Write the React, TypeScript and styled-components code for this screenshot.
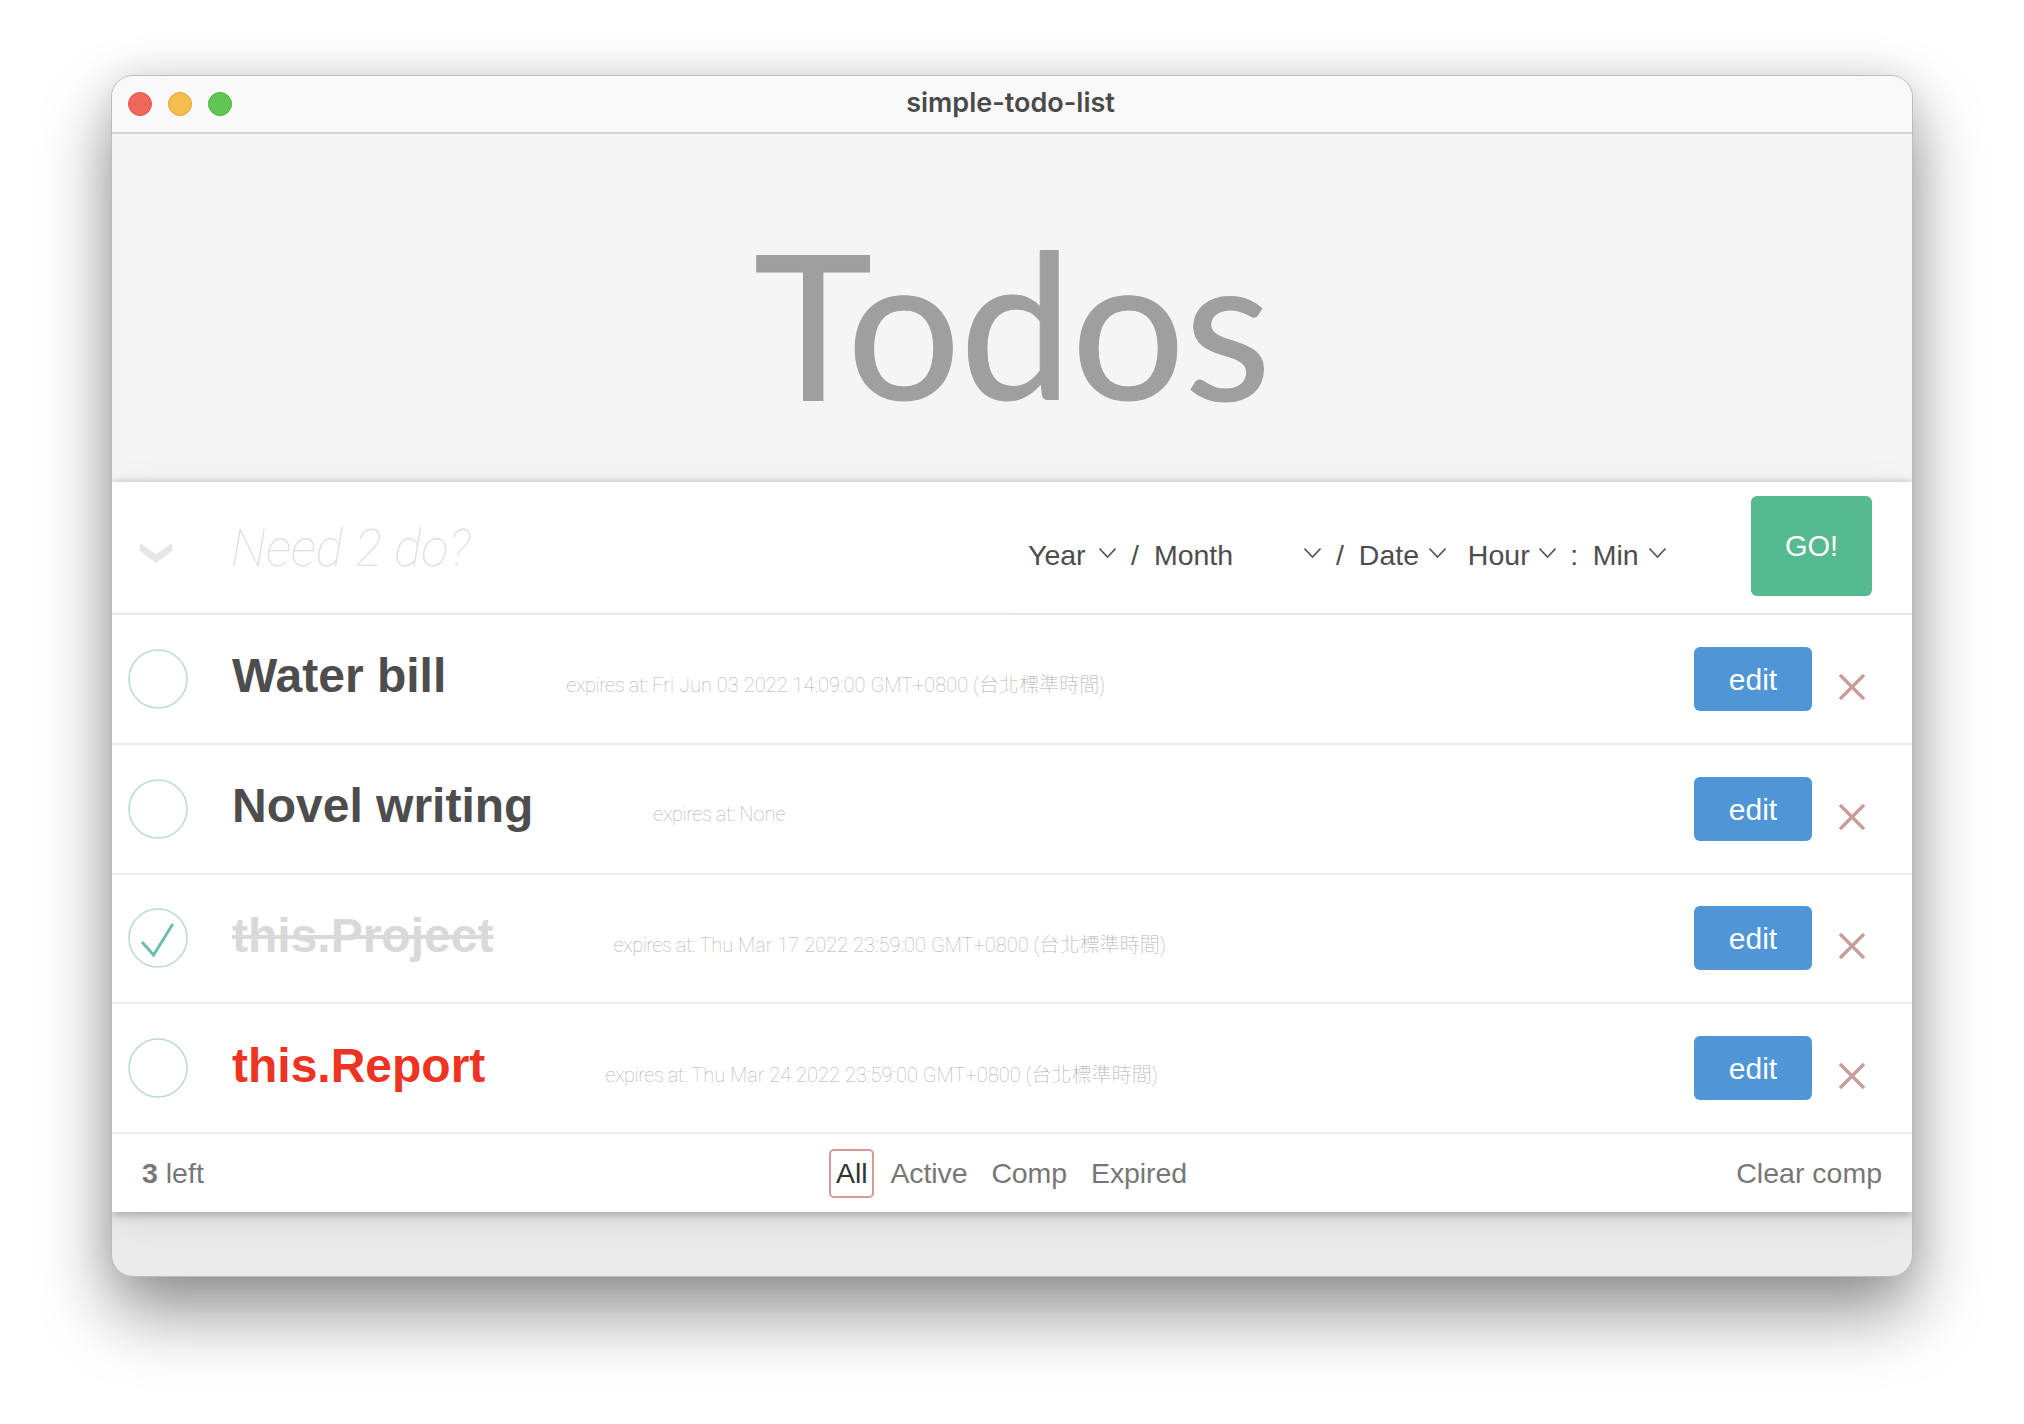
import React from 'react';
import styled, { createGlobalStyle } from 'styled-components';

interface Todo {
	id: string;
	title: string;
	expires: string;
	done?: boolean;
	expired?: boolean;
}

const todos: Todo[] = [
	{ id: 'a', title: 'Water bill', expires: 'Fri Jun 03 2022 14:09:00 GMT+0800 (台北標準時間)' },
	{ id: 'b', title: 'Novel writing', expires: 'None' },
	{ id: 'c', title: 'this.Project', expires: 'Thu Mar 17 2022 23:59:00 GMT+0800 (台北標準時間)', done: true },
	{ id: 'd', title: 'this.Report', expires: 'Thu Mar 24 2022 23:59:00 GMT+0800 (台北標準時間)', expired: true },
];

const GlobalStyle = createGlobalStyle`
	* {
		box-sizing: border-box;
	}
	html, body {
		margin: 0;
		background: #fff;
	}
	body {
		font-family: 'Liberation Sans', Arial, 'Noto Sans CJK TC', sans-serif;
		color: #4d4d4d;
	}
`;

const Page = styled.div`
	width: 2024px;
	height: 1424px;
	padding: 75px 111px 0 111px;
	overflow: hidden;
`;

const Window = styled.div`
	height: 1202px;
	border-radius: 22px;
	background: #ebebeb;
	border: 1px solid #bcbcbc;
	box-shadow: 0 36px 70px rgba(0, 0, 0, 0.42), 0 0 40px rgba(0, 0, 0, 0.1);
	overflow: hidden;
`;

const TitleBar = styled.div`
	position: relative;
	height: 58px;
	display: flex;
	align-items: center;
	justify-content: center;
	background: #f9f9f9;
	border-bottom: 2px solid #d4d4d4;
`;

const Lights = styled.div`
	position: absolute;
	left: 16px;
	top: 16px;
	display: flex;
	gap: 16px;
`;

const Light = styled.span<{ $fill: string; $edge: string }>`
	width: 24px;
	height: 24px;
	border-radius: 50%;
	background: ${(p) => p.$fill};
	border: 1px solid ${(p) => p.$edge};
`;

const WindowTitle = styled.div`
	font-family: Inter, sans-serif;
	font-size: 27px;
	font-weight: 600;
	color: #4a4a4a;
	margin: -3px 0 0 -3px;
`;

const Header = styled.header`
	height: 348px;
	background: #f5f5f5;
	display: flex;
	justify-content: center;
`;

const Heading = styled.h1`
	margin: 69px 0 0;
	font-family: Lato, sans-serif;
	font-size: 201px;
	line-height: 240px;
	font-weight: 400;
	color: #9f9f9f;
	letter-spacing: -1px;
	-webkit-text-stroke: 1px #9f9f9f;
`;

const Panel = styled.div`
	background: #fff;
	box-shadow: 0 2px 10px rgba(0, 0, 0, 0.3), 0 10px 40px rgba(0, 0, 0, 0.07);
`;

const InputRow = styled.div`
	height: 133px;
	display: flex;
	border-bottom: 2px solid #e6e6e6;
`;

const InputArea = styled.div`
	width: 900px;
	display: flex;
	align-items: flex-start;
	border-bottom: 2px solid #f0f0f0;
	margin-bottom: -1px;
`;

const ToggleAll = styled.svg`
	width: 34px;
	height: 24px;
	margin: 58px 0 0 27px;
	flex: none;
`;

const Placeholder = styled.div`
	margin: 37px 0 0 58px;
	font-family: Roboto, sans-serif;
	font-size: 51px;
	line-height: 60px;
	font-weight: 100;
	font-style: italic;
	color: #dfdfdf;
`;

const DateArea = styled.div`
	flex: 1;
	display: flex;
	align-items: flex-start;
	padding: 14px 40px 0 16px;
`;

const DateFields = styled.div`
	display: flex;
	align-items: center;
	height: 68px;
	margin-top: 25px;
	font-size: 28.5px;
	color: #4d4d4d;
`;

const DateSelect = styled.div<{ $width: number }>`
	width: ${(p) => p.$width}px;
	display: flex;
	align-items: center;
	justify-content: space-between;
`;

const Separator = styled.span<{ $gap: number }>`
	margin: 0 ${(p) => p.$gap}px;
`;

const SelectArrow = styled.svg`
	width: 17px;
	height: 12px;
	margin-top: -4px;
	flex: none;
`;

const GoButton = styled.button`
	width: 121px;
	height: 100px;
	margin-left: auto;
	border: none;
	border-radius: 6px;
	background: #55ba8f;
	color: #fff;
	font: inherit;
	font-size: 29px;
`;

const Row = styled.div`
	height: 129.75px;
	display: flex;
	align-items: center;
	padding-left: 16px;
	border-bottom: 2px solid #ededed;
`;

const Check = styled.svg`
	width: 60px;
	height: 60px;
	flex: none;
`;

const TodoTitle = styled.span<{ $done?: boolean; $expired?: boolean }>`
	margin: -6px 0 0 44px;
	font-size: 48px;
	font-weight: 700;
	color: ${(p) => (p.$done ? '#d9d9d9' : p.$expired ? '#ee3323' : '#4d4d4d')};
	text-decoration: ${(p) => (p.$done ? 'line-through' : 'none')};
`;

const Expires = styled.span`
	margin: 10px 0 0 120px;
	font-family: Roboto, 'Noto Sans CJK TC', sans-serif;
	font-size: 20px;
	font-weight: 100;
	color: #b0b0b0;
	letter-spacing: 0.04px;
`;

const ExpiresLabel = styled.span`
	letter-spacing: -0.45px;
`;

const EditButton = styled.button`
	width: 118px;
	height: 64px;
	margin-left: auto;
	padding: 2px 0 0;
	border: none;
	border-radius: 6px;
	background: #5095d6;
	color: #fff;
	font: inherit;
	font-size: 30px;
`;

const RemoveIcon = styled.svg`
	width: 28px;
	height: 28px;
	margin: 16px 46px 0 26px;
	flex: none;
`;

const Footer = styled.footer`
	height: 78px;
	position: relative;
	display: flex;
	align-items: center;
	justify-content: space-between;
	padding: 1px 30px 0;
	font-size: 28.5px;
	color: #777;
`;

const Count = styled.span`
	strong {
		font-weight: 700;
	}
`;

const Filters = styled.div`
	position: absolute;
	left: 717px;
	top: 15px;
	display: flex;
	align-items: center;
	gap: 16px;
`;

const Filter = styled.span<{ $active?: boolean }>`
	height: 49px;
	display: flex;
	align-items: center;
	padding: 0 ${(p) => (p.$active ? '5px' : '0')};
	border-radius: 5px;
	border: ${(p) => (p.$active ? '2px solid #d39c9a' : 'none')};
	color: ${(p) => (p.$active ? '#333' : '#777')};
	margin-right: ${(p) => (p.$active ? '0' : '8px')};
	letter-spacing: -0.1px;
`;

const Arrow = () => (
	<SelectArrow viewBox="0 0 17 12">
		<path d="M0.5 1.5 L8.5 10 L16.5 1.5" fill="none" stroke="#555" strokeWidth="1.6" />
	</SelectArrow>
);

const App: React.FC = () => {
	return (
		<Page>
			<GlobalStyle />
			<Window>
				<TitleBar>
					<Lights>
						<Light $fill="#f0675c" $edge="#dc5449" />
						<Light $fill="#f6bd4d" $edge="#dea338" />
						<Light $fill="#5fc854" $edge="#4cae41" />
					</Lights>
					<WindowTitle>simple-todo-list</WindowTitle>
				</TitleBar>
				<Header>
					<Heading>Todos</Heading>
				</Header>
				<Panel>
					<InputRow>
						<InputArea>
							<ToggleAll viewBox="0 0 34 24">
								<path d="M1 3 L17 14 L33 3 L33 11 L17 23 L1 11 Z" fill="#e6e6e6" />
							</ToggleAll>
							<Placeholder>Need 2 do?</Placeholder>
						</InputArea>
						<DateArea>
							<DateFields>
								<DateSelect $width={88}>Year<Arrow /></DateSelect>
								<Separator $gap={15}>/</Separator>
								<DateSelect $width={167}>Month<Arrow /></DateSelect>
								<Separator $gap={15}>/</Separator>
								<DateSelect $width={87}>Date<Arrow /></DateSelect>
								<Separator $gap={11}></Separator>
								<DateSelect $width={88}>Hour<Arrow /></DateSelect>
								<Separator $gap={14.5}>:</Separator>
								<DateSelect $width={73}>Min<Arrow /></DateSelect>
							</DateFields>
							<GoButton>GO!</GoButton>
						</DateArea>
					</InputRow>
					{todos.map((todo) => (
						<Row key={todo.id}>
							<Check viewBox="0 0 60 60">
								<circle cx="30" cy="30" r="29" fill="none" stroke="#bddad5" strokeWidth="1.6" />
								{todo.done && <path d="M14 34 L25.6 47 L44.8 16" fill="none" stroke="#6dbfa8" strokeWidth="3" />}
							</Check>
							<TodoTitle $done={todo.done} $expired={todo.expired}>
								{todo.title}
							</TodoTitle>
							<Expires>
								<ExpiresLabel>expires at: </ExpiresLabel>
								{todo.expires}
							</Expires>
							<EditButton>edit</EditButton>
							<RemoveIcon viewBox="0 0 28 28">
								<path d="M2 2 L26 26 M26 2 L2 26" fill="none" stroke="#c99d9b" strokeWidth="3.4" />
							</RemoveIcon>
						</Row>
					))}
					<Footer>
						<Count>
							<strong>3</strong> left
						</Count>
						<Filters>
							<Filter $active>All</Filter>
							<Filter>Active</Filter>
							<Filter>Comp</Filter>
							<Filter>Expired</Filter>
						</Filters>
						<span>Clear comp</span>
					</Footer>
				</Panel>
			</Window>
		</Page>
	);
};

export default App;
